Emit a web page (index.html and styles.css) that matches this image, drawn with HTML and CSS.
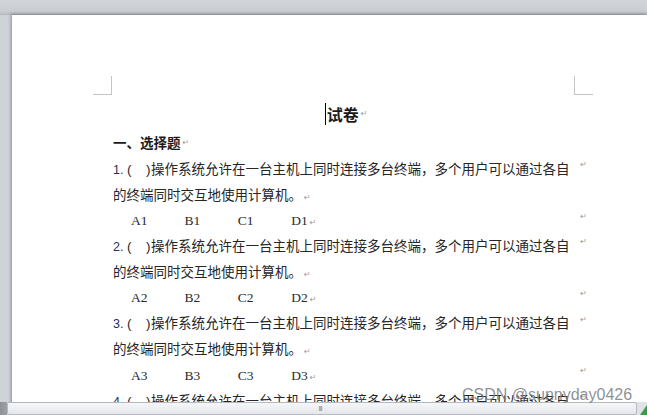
FILE: index.html
```html
<!DOCTYPE html>
<html lang="zh-CN">

<head>
  <meta charset="UTF-8">
  <meta name="viewport" content="width=device-width, initial-scale=1">
  <title>试卷</title>
  <link rel="stylesheet" href="styles.css">
</head>

<body>
  <div class="workspace">
    <div class="page">
      <div class="sheet">
        <div class="marks">
          <span class="mark mark-l"></span>
          <span class="mark mark-r"></span>
        </div>

        <div class="column">
          <div class="title"><span class="caret"></span>试卷<span class="rm">↵</span></div>
          <div class="heading">一、选择题<span class="rm">↵</span></div>

          <!-- question 1 -->
          <div class="row">
            <span class="txt"><span class="num">1.</span><span class="lp">(</span><span class="rp">)</span>操作系统允许在一台主机上同时连接多台终端，多个用户可以通过各自</span>
            <span class="rm side">↵</span>
          </div>
          <div class="row"><span class="txt">的终端同时交互地使用计算机。<span class="rm">↵</span></span></div>
          <div class="row opts">
            <span class="txt opt-list"><span class="opt">A1</span><span class="opt">B1</span><span class="opt">C1</span><span class="opt last">D1<span class="rm">↵</span></span></span>
            <span class="rm side">↵</span>
          </div>

          <!-- question 2 -->
          <div class="row">
            <span class="txt"><span class="num">2.</span><span class="lp">(</span><span class="rp">)</span>操作系统允许在一台主机上同时连接多台终端，多个用户可以通过各自</span>
            <span class="rm side">↵</span>
          </div>
          <div class="row"><span class="txt">的终端同时交互地使用计算机。<span class="rm">↵</span></span></div>
          <div class="row opts">
            <span class="txt opt-list"><span class="opt">A2</span><span class="opt">B2</span><span class="opt">C2</span><span class="opt last">D2<span class="rm">↵</span></span></span>
            <span class="rm side">↵</span>
          </div>

          <!-- question 3 -->
          <div class="row">
            <span class="txt"><span class="num">3.</span><span class="lp">(</span><span class="rp">)</span>操作系统允许在一台主机上同时连接多台终端，多个用户可以通过各自</span>
            <span class="rm side">↵</span>
          </div>
          <div class="row"><span class="txt">的终端同时交互地使用计算机。<span class="rm">↵</span></span></div>
          <div class="row opts">
            <span class="txt opt-list"><span class="opt">A3</span><span class="opt">B3</span><span class="opt">C3</span><span class="opt last">D3<span class="rm">↵</span></span></span>
            <span class="rm side">↵</span>
          </div>

          <!-- question 4 (cut off by the scrollbar) -->
          <div class="row">
            <span class="txt"><span class="num">4.</span><span class="lp">(</span><span class="rp">)</span>操作系统允许在一台主机上同时连接多台终端，多个用户可以通过各自</span>
            <span class="rm side">↵</span>
          </div>
        </div>
      </div>
    </div>
  </div>

  <div class="hbar">
    <div class="track"><span class="grip">III</span></div>
    <span class="corner"></span>
  </div>

  <div class="watermark">CSDN @sunnyday0426</div>
</body>

</html>
```

FILE: styles.css
```css
html, body {
    margin: 0;
    padding: 0;
    height: 100%;
}

body {
    width: 647px;
    height: 415px;
    overflow: hidden;
    display: flex;
    flex-direction: column;
    background-color: #cfd2d7; /* word's workspace grey */
    font-family: "Noto Sans CJK SC", "Noto Sans", sans-serif;
    color: #262626;
}

.workspace {
    flex: 1;
    overflow: hidden;
    padding: 15px 0 0 12px;
    background: linear-gradient(to bottom, #d2d5da 0px, #c9ccd1 12px, #b3b7bd 15px, #cfd2d7 15px);
}

.page {
    background-color: #fff;
    height: 600px;
    box-shadow: -1px -1px 3px rgba(60, 65, 75, 0.45);
    padding-left: 81px;
}

.sheet {
    width: 500px;
    padding-top: 61px;
}

/* crop marks at the page corners */
.marks {
    display: flex;
    justify-content: space-between;
    height: 19px;
}

.mark {
    width: 19px;
    height: 19px;
    box-sizing: border-box;
    border-bottom: 1px solid #c4c4c4;
}

.mark-l {
    border-right: 1px solid #c4c4c4;
}

.mark-r {
    border-left: 1px solid #c4c4c4;
}

.column {
    margin-left: 20px;
    width: 477px;
    font-size: 13.5px;
}

.title {
    width: 461px;
    height: 26px;
    margin-top: 6px;
    padding-left: 5px;
    box-sizing: border-box;
    display: flex;
    justify-content: center;
    align-items: center;
    font-size: 16px;
    font-weight: bold;
    line-height: 1;
    color: #1b1b1b;
}

.caret {
    display: inline-block;
    width: 0;
    height: 22px;
    border-left: 1px solid #000;
    margin-right: 1px;
}

.heading {
    height: 26px;
    margin-top: 3px;
    display: flex;
    align-items: center;
    font-weight: bold;
    line-height: 1;
    color: #1b1b1b;
}

.row {
    height: 25.8px;
    display: flex;
    justify-content: space-between;
    align-items: center;
    white-space: nowrap;
    line-height: 1;
}

.num {
    display: inline-block;
    width: 14px;
    font-family: "Liberation Sans", sans-serif;
    font-size: 12.5px;
    color: #22305c;
}

.lp {
    display: inline-block;
    width: 19px;
    font-family: "Liberation Sans", sans-serif;
}

.rp {
    display: inline-block;
    width: 5px;
    font-family: "Liberation Sans", sans-serif;
}

/* return marks */
.rm {
    font-family: "DejaVu Sans", sans-serif;
    font-size: 8px;
    font-weight: normal;
    color: #9a9a9a;
    margin-left: 2px;
}

.rm.side {
    align-self: flex-start;
    line-height: 17px;
    margin-right: 3px;
}

.opts {
    font-family: "Liberation Serif", serif;
    font-size: 13.5px;
    color: #2a2a2a;
}

.opt-list {
    padding-left: 18px;
}

.opt {
    display: inline-block;
    width: 53.4px;
}

.opt.last {
    width: auto;
}

/* horizontal scrollbar */
.hbar {
    height: 13px;
    flex-shrink: 0;
    display: flex;
    background: linear-gradient(to right, #8e9296 0px, #9ea2a7 7px, #dfe2e6 7px);
}

.track {
    margin-left: 7px;
    width: 630px;
    box-sizing: border-box;
    border: 1px solid #b5b9bf;
    border-radius: 2px;
    background: linear-gradient(to bottom, #f6f7f9, #e4e6ea);
    display: flex;
    justify-content: center;
    align-items: center;
}

.grip {
    font-family: "Liberation Sans", sans-serif;
    font-size: 8px;
    letter-spacing: -1px;
    color: #8a8e94;
    margin-left: -4px;
}

.corner {
    width: 0;
    height: 0;
    margin-left: 3px;
    margin-top: 3px;
    border-left: 7px solid transparent;
    border-bottom: 10px solid #3f9a4c;
}

.watermark {
    position: absolute;
    left: 462px;
    top: 386px;
    font-family: "Liberation Sans", Arial, sans-serif;
    font-size: 16px;
    line-height: 18px;
    color: rgba(120, 124, 130, 0.85);
    white-space: nowrap;
}
```
